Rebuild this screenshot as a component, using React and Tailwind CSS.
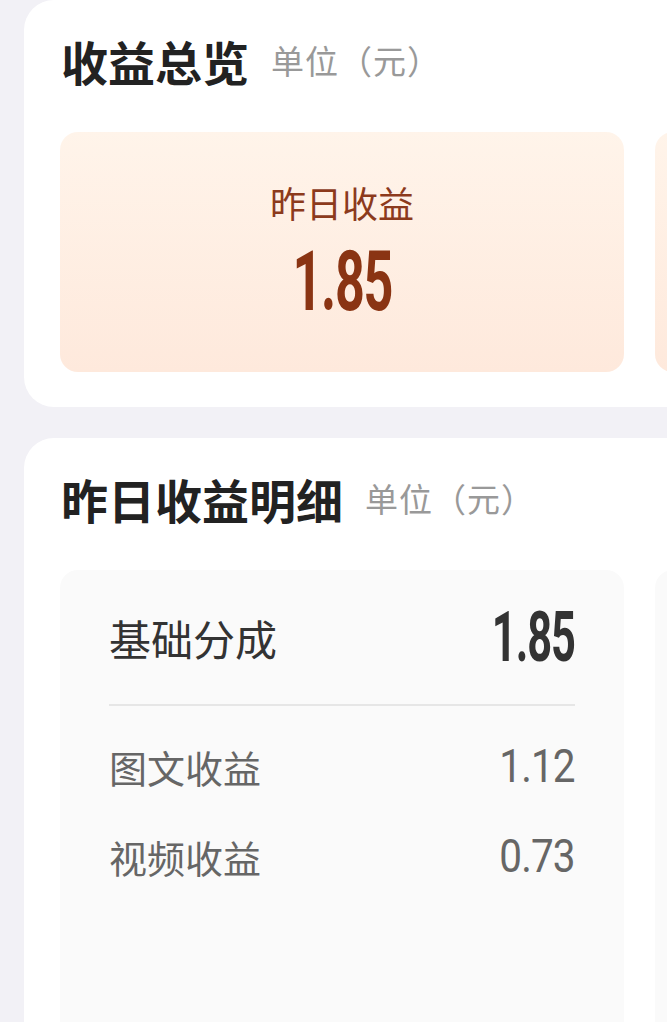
import React from "react";

const cjk = { fontFamily: '"Noto Sans CJK SC", "Noto Sans", sans-serif' };
const num = { fontFamily: 'Roboto, "Liberation Sans", sans-serif' };

function Title({ text }) {
    return (
        <div className="flex items-center h-[56px] pl-[37px]">
            <span className="text-[47px] leading-none font-bold text-[#222222]">{text}</span>
            <span className="ml-[22px] text-[33px] leading-none tracking-[1px] text-[#999999]">单位（元）</span>
        </div>
    );
}

function DetailRow({ label, value, strong }) {
    return (
        <div className="flex items-center justify-between h-[90px]">
            <span className={strong ? "text-[42px] text-[#333333]" : "text-[38px] text-[#666666]"}>{label}</span>
            {strong ? (
                <span style={num} className="inline-block origin-right scale-x-[0.62] text-[70px] leading-none font-bold tracking-tight text-[#333333]">
                    {value}
                </span>
            ) : (
                <span style={num} className="inline-block origin-right scale-x-[0.88] text-[46px] leading-none tracking-[-1px] text-[#666666]">
                    {value}
                </span>
            )}
        </div>
    );
}

export default function App() {
    return (
        <div style={cjk} className="w-full h-[1022px] overflow-hidden bg-[#f2f1f6] pl-[24px]">
            {/* 收益总览 */}
            <div className="w-[720px] bg-white rounded-[30px] pt-[32px] pb-[35px] overflow-hidden">
                <Title text="收益总览" />
                <div className="flex gap-[31px] mt-[44px] pl-[36px]">
                    <div className="w-[564px] h-[240px] shrink-0 rounded-[18px] bg-gradient-to-b from-[#fff4ea] to-[#fee9dc] flex flex-col items-center">
                        <span className="mt-[50px] text-[36px] leading-[40px] text-[#8c3a1c]">昨日收益</span>
                        <span style={num} className="mt-[18px] inline-block scale-x-[0.62] text-[84px] leading-none font-bold tracking-tight text-[#8a3413]">
                            1.85
                        </span>
                    </div>
                    <div className="w-[564px] h-[240px] shrink-0 rounded-[18px] bg-gradient-to-b from-[#fff4ea] to-[#fee9dc]" />
                </div>
            </div>

            {/* 昨日收益明细 */}
            <div className="w-[720px] bg-white rounded-[30px] pt-[32px] mt-[31px] overflow-hidden">
                <Title text="昨日收益明细" />
                <div className="flex gap-[31px] mt-[44px] pl-[36px]">
                    <div className="w-[564px] h-[480px] shrink-0 rounded-[18px] bg-[#fafafa] px-[49px] pt-[22px]">
                        <DetailRow label="基础分成" value="1.85" strong />
                        <div className="mt-[22px] h-[2px] bg-[#e6e6e6]" />
                        <div className="mt-[15px]">
                            <DetailRow label="图文收益" value="1.12" />
                            <DetailRow label="视频收益" value="0.73" />
                        </div>
                    </div>
                    <div className="w-[564px] h-[480px] shrink-0 rounded-[18px] bg-[#fafafa]" />
                </div>
            </div>
        </div>
    );
}
